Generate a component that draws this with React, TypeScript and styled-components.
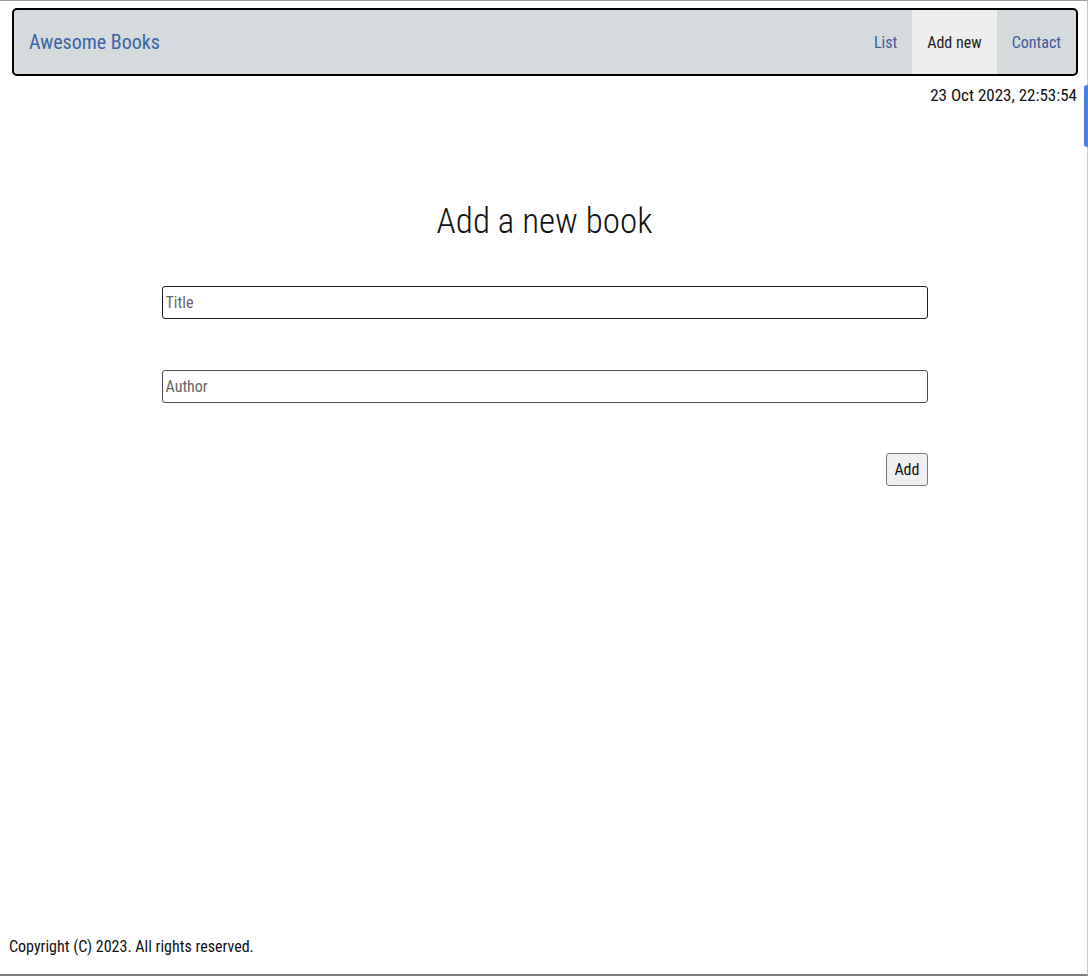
import React from "react";
import styled, { createGlobalStyle } from "styled-components";

const GlobalStyle = createGlobalStyle`
  html, body { margin: 0; padding: 0; background: #fff; }
  body {
    font-family: Roboto, "Liberation Sans", Arial, sans-serif;
    font-stretch: condensed;
    color: #111;
  }
  * { box-sizing: border-box; }
`;

const Page = styled.div`
  position: relative;
  min-height: 976px;
  display: flex;
  flex-direction: column;
  border-top: 1px solid #9a9a9a;
  border-right: 1px solid #c9c9c9;
  border-bottom: 2px solid #7f7f7f;
`;

const SideTab = styled.div`
  position: absolute;
  right: -1px;
  top: 84px;
  width: 4px;
  height: 62px;
  background: #4a7fe3;
  border-radius: 3px 0 0 3px;
`;

const Nav = styled.nav`
  margin: 7px 9px 0 12px;
  height: 68px;
  display: flex;
  justify-content: space-between;
  align-items: stretch;
  background: #d5dadd;
  border: 2px solid #000;
  border-radius: 5px;
  overflow: hidden;
`;

const Brand = styled.a`
  display: flex;
  align-items: center;
  padding: 0 15px;
  font-size: 20px;
  color: #3a64a9;
  text-decoration: none;
`;

const NavList = styled.ul`
  display: flex;
  margin: 0;
  padding: 0;
  list-style: none;
`;

const NavItem = styled.li<{ $active?: boolean }>`
  display: flex;
  align-items: center;
  padding: 0 15px;
  font-size: 16px;
  color: ${(p) => (p.$active ? "#1d1d1d" : "#3d5c9c")};
  background: ${(p) => (p.$active ? "#eeeeee" : "transparent")};
`;

const DateLine = styled.p`
  margin: 9px 0 0;
  padding-right: 10px;
  text-align: right;
  font-size: 17px;
  line-height: 20px;
  color: #111;
`;

const Main = styled.main`
  display: flex;
  flex-direction: column;
  align-items: center;
  padding-left: 2px;
`;

const Heading = styled.h1`
  margin: 97px 0 0;
  font-size: 35px;
  line-height: 40px;
  font-weight: 300;
  color: #111;
`;

const Form = styled.form`
  width: 766px;
  margin-top: 44px;
  display: flex;
  flex-direction: column;
  gap: 51px;
`;

const Input = styled.input<{ $dark?: boolean }>`
  width: 100%;
  height: 33px;
  margin: 0;
  padding: 0 3px;
  font-family: inherit;
  font-stretch: condensed;
  font-size: 16px;
  color: #111;
  background: #fff;
  border: 1px solid ${(p) => (p.$dark ? "#1e1e1e" : "#4e4e4e")};
  border-radius: 3px;
  outline: none;
  &::placeholder { color: #666; }
`;

const Actions = styled.div`
  display: flex;
  justify-content: flex-end;
  margin-top: -1px;
`;

const AddButton = styled.button`
  height: 33px;
  padding: 0 7px;
  font-family: inherit;
  font-stretch: condensed;
  font-size: 16px;
  color: #111;
  background: #efefef;
  border: 1px solid #7a7a7a;
  border-radius: 3px;
`;

const Footer = styled.footer`
  margin-top: auto;
  padding: 0 0 18px 9px;
  font-size: 16px;
  line-height: 18px;
  color: #111;
`;

export default function App() {
  return (
    <>
      <GlobalStyle />
      <Page>
        <SideTab />
        <Nav>
          <Brand href="#">Awesome Books</Brand>
          <NavList>
            <NavItem>List</NavItem>
            <NavItem $active>Add new</NavItem>
            <NavItem>Contact</NavItem>
          </NavList>
        </Nav>
        <DateLine>23 Oct 2023, 22:53:54</DateLine>
        <Main>
          <Heading>Add a new book</Heading>
          <Form onSubmit={(e) => e.preventDefault()}>
            <Input $dark placeholder="Title" />
            <Input placeholder="Author" />
            <Actions>
              <AddButton type="submit">Add</AddButton>
            </Actions>
          </Form>
        </Main>
        <Footer>Copyright (C) 2023. All rights reserved.</Footer>
      </Page>
    </>
  );
}
